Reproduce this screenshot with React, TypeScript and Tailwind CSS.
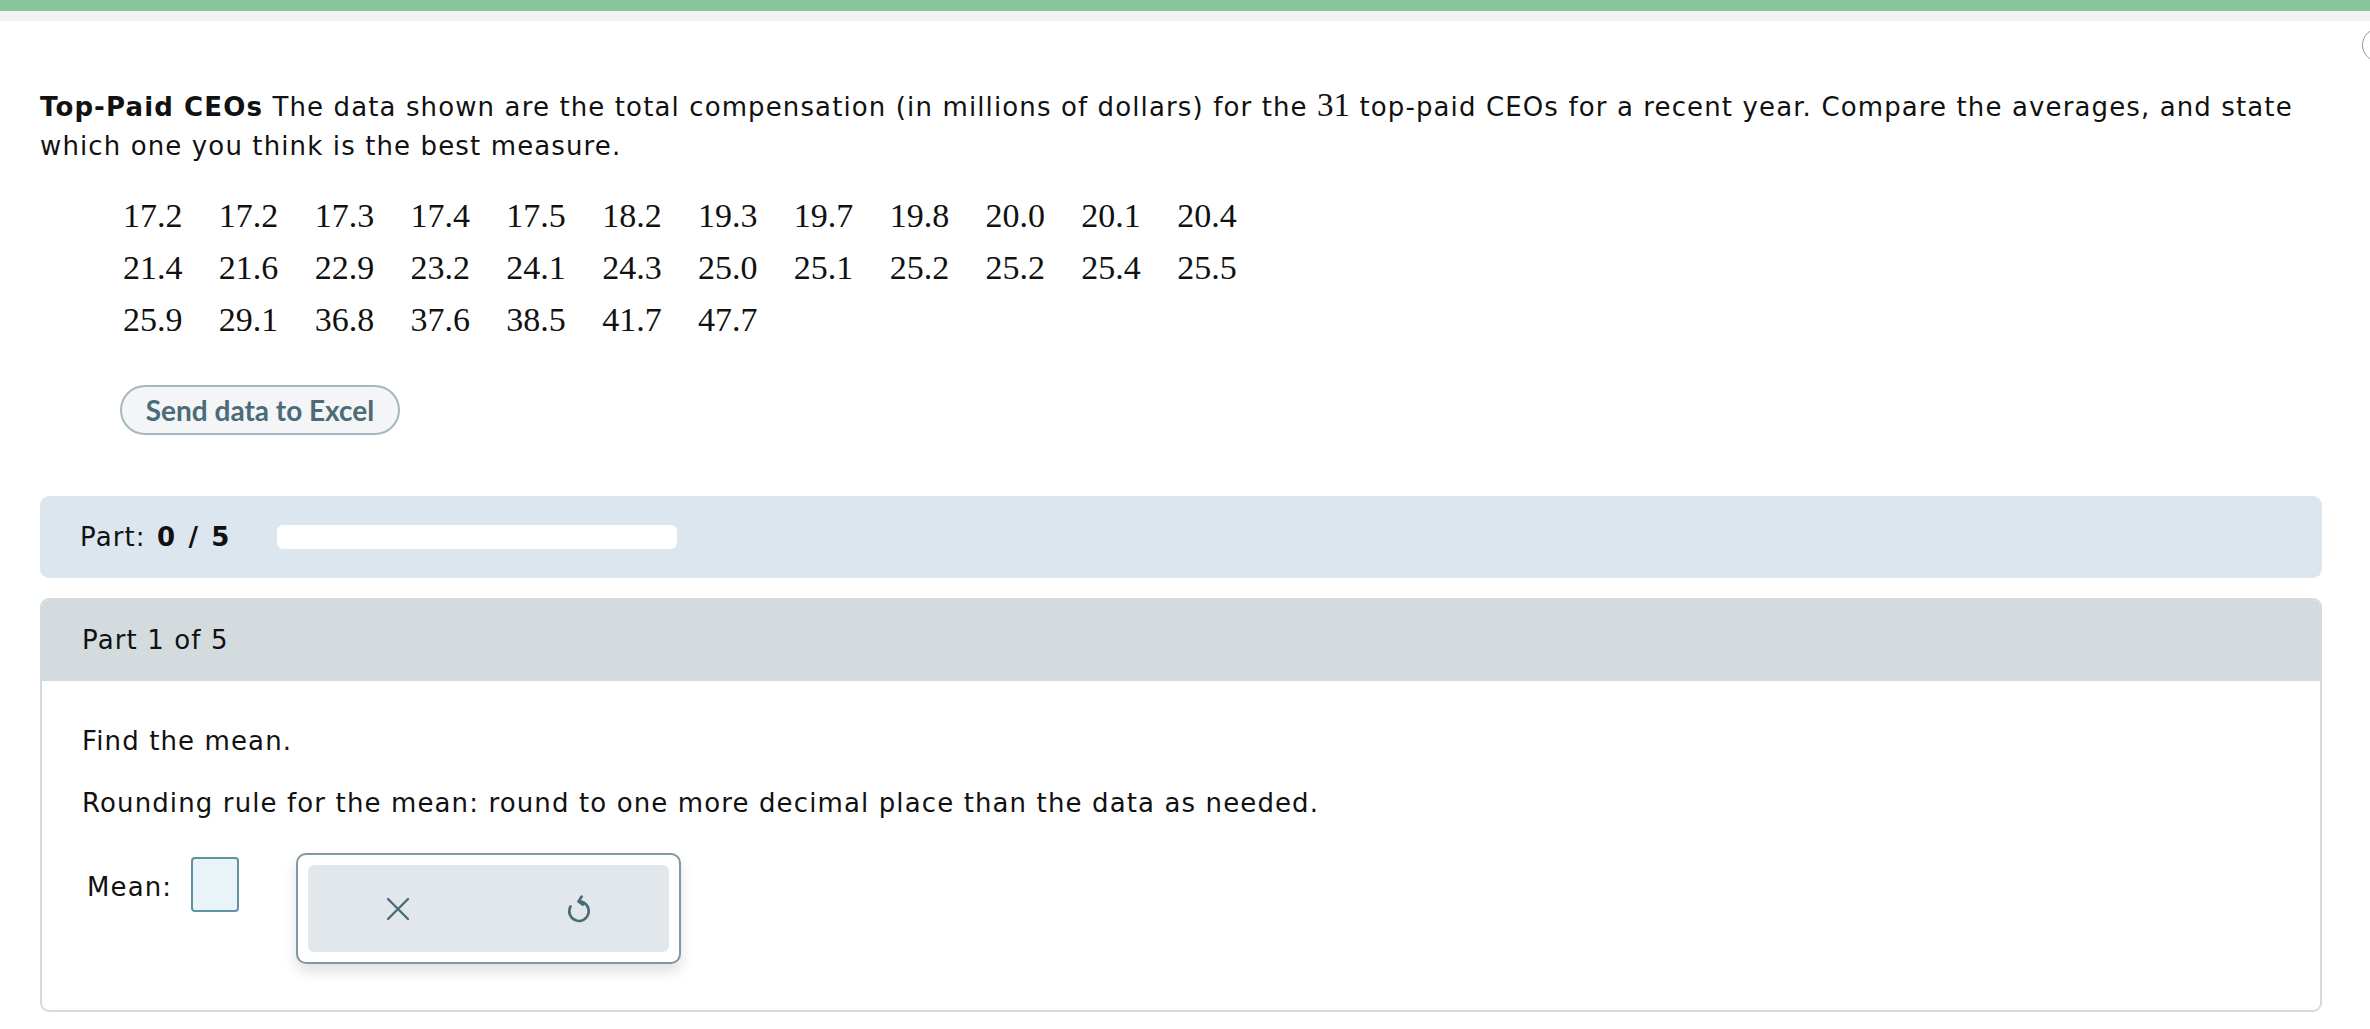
import React from 'react';

const rows: string[][] = [
  ['17.2', '17.2', '17.3', '17.4', '17.5', '18.2', '19.3', '19.7', '19.8', '20.0', '20.1', '20.4'],
  ['21.4', '21.6', '22.9', '23.2', '24.1', '24.3', '25.0', '25.1', '25.2', '25.2', '25.4', '25.5'],
  ['25.9', '29.1', '36.8', '37.6', '38.5', '41.7', '47.7'],
];

const verdana = { fontFamily: '"DejaVu Sans", Verdana, sans-serif' };

const App = () => {
  return (
    <div className="relative min-h-screen bg-white text-[#111] overflow-hidden tracking-[0.07em]" style={verdana}>
      <div className="h-[11px] bg-[#87c49a]" />
      <div className="h-[10px] bg-[#f1f3f5]" />

      {/* partly hidden circle button at the right edge */}
      <div className="absolute left-[2362px] top-[28px] w-[34px] h-[34px] rounded-full border border-[#8b9ca4]" />

      <div className="pl-[40px] pr-[48px]">
        <p className="mt-[67px] text-[26px] leading-[39px]">
          <b>Top-Paid CEOs</b> The data shown are the total compensation (in millions of dollars) for the{' '}
          <span className="text-[33px] leading-none tracking-normal" style={{ fontFamily: '"Liberation Serif", serif' }}>
            31
          </span>{' '}
          top-paid CEOs for a recent year. Compare the averages, and state which one you think is the best
          measure.
        </p>

        <div
          className="mt-[24px] ml-[83px] w-[1150px] grid grid-cols-12 text-[34px] leading-[52px] tracking-normal"
          style={{ fontFamily: '"Liberation Serif", "Times New Roman", serif' }}
        >
          {rows.flat().map((v, i) => (
            <span key={i}>{v}</span>
          ))}
        </div>

        <button
          className="mt-[39px] ml-[80px] w-[280px] h-[50px] rounded-full border-2 border-[#a6b7bf] bg-[#f3f5f7] text-[#4b6b79] text-[28px] font-bold tracking-normal"
          style={{ fontFamily: 'Lato, "Open Sans", sans-serif' }}
        >
          Send data to Excel
        </button>

        <div className="mt-[61px] h-[82px] rounded-[9px] bg-[#dce6ee] flex items-center pl-[40px]">
          <span className="w-[197px] text-[26px] [word-spacing:2px]">
            Part: <b>0 / 5</b>
          </span>
          <div className="w-[400px] h-[24px] rounded-[6px] bg-white" />
        </div>

        <div className="mt-[20px] rounded-[9px] border-2 border-[#d3dbdf] overflow-hidden">
          <div className="h-[81px] bg-[#d3dbdf] flex items-center pl-[40px] text-[26px]">Part 1 of 5</div>
          <div className="pl-[40px] pt-[41px] pb-[46px] text-[26px] leading-[39px]">
            <p>Find the mean.</p>
            <p className="mt-[23px]">Rounding rule for the mean: round to one more decimal place than the data as needed.</p>

            <div className="mt-[30px] flex items-start">
              <span className="w-[109px] pl-[5px] mt-[15px]">Mean:</span>
              <div className="mt-[4px] w-[48px] h-[55px] rounded-[4px] border-2 border-[#5f92a3] bg-[#e9f4f8]" />
              <div className="ml-[57px] w-[385px] h-[111px] rounded-[10px] border-2 border-[#7f98a2] bg-white p-[10px] shadow-[0_8px_14px_rgba(0,0,0,0.12)]">
                <div className="h-full rounded-[6px] bg-[#e1e7ea] flex">
                  <div className="flex-1 flex items-center justify-center">
                    <svg width="28" height="28" viewBox="0 0 28 28" fill="none" stroke="#4b6b79" strokeWidth="2.4" strokeLinecap="round">
                      <path d="M4 4 L24 24 M24 4 L4 24" />
                    </svg>
                  </div>
                  <div className="flex-1 flex items-center justify-center">
                    <svg width="26" height="36" viewBox="0 0 24 32" fill="none" stroke="#4b6b79" strokeWidth="2.4" strokeLinecap="round" strokeLinejoin="round">
                      <path d="M12 9 A9 9 0 1 1 4.2 13.5" />
                      <path d="M14.5 4.5 L11.5 9 L15.5 12" />
                    </svg>
                  </div>
                </div>
              </div>
            </div>
          </div>
        </div>
      </div>
    </div>
  );
};

export default App;
